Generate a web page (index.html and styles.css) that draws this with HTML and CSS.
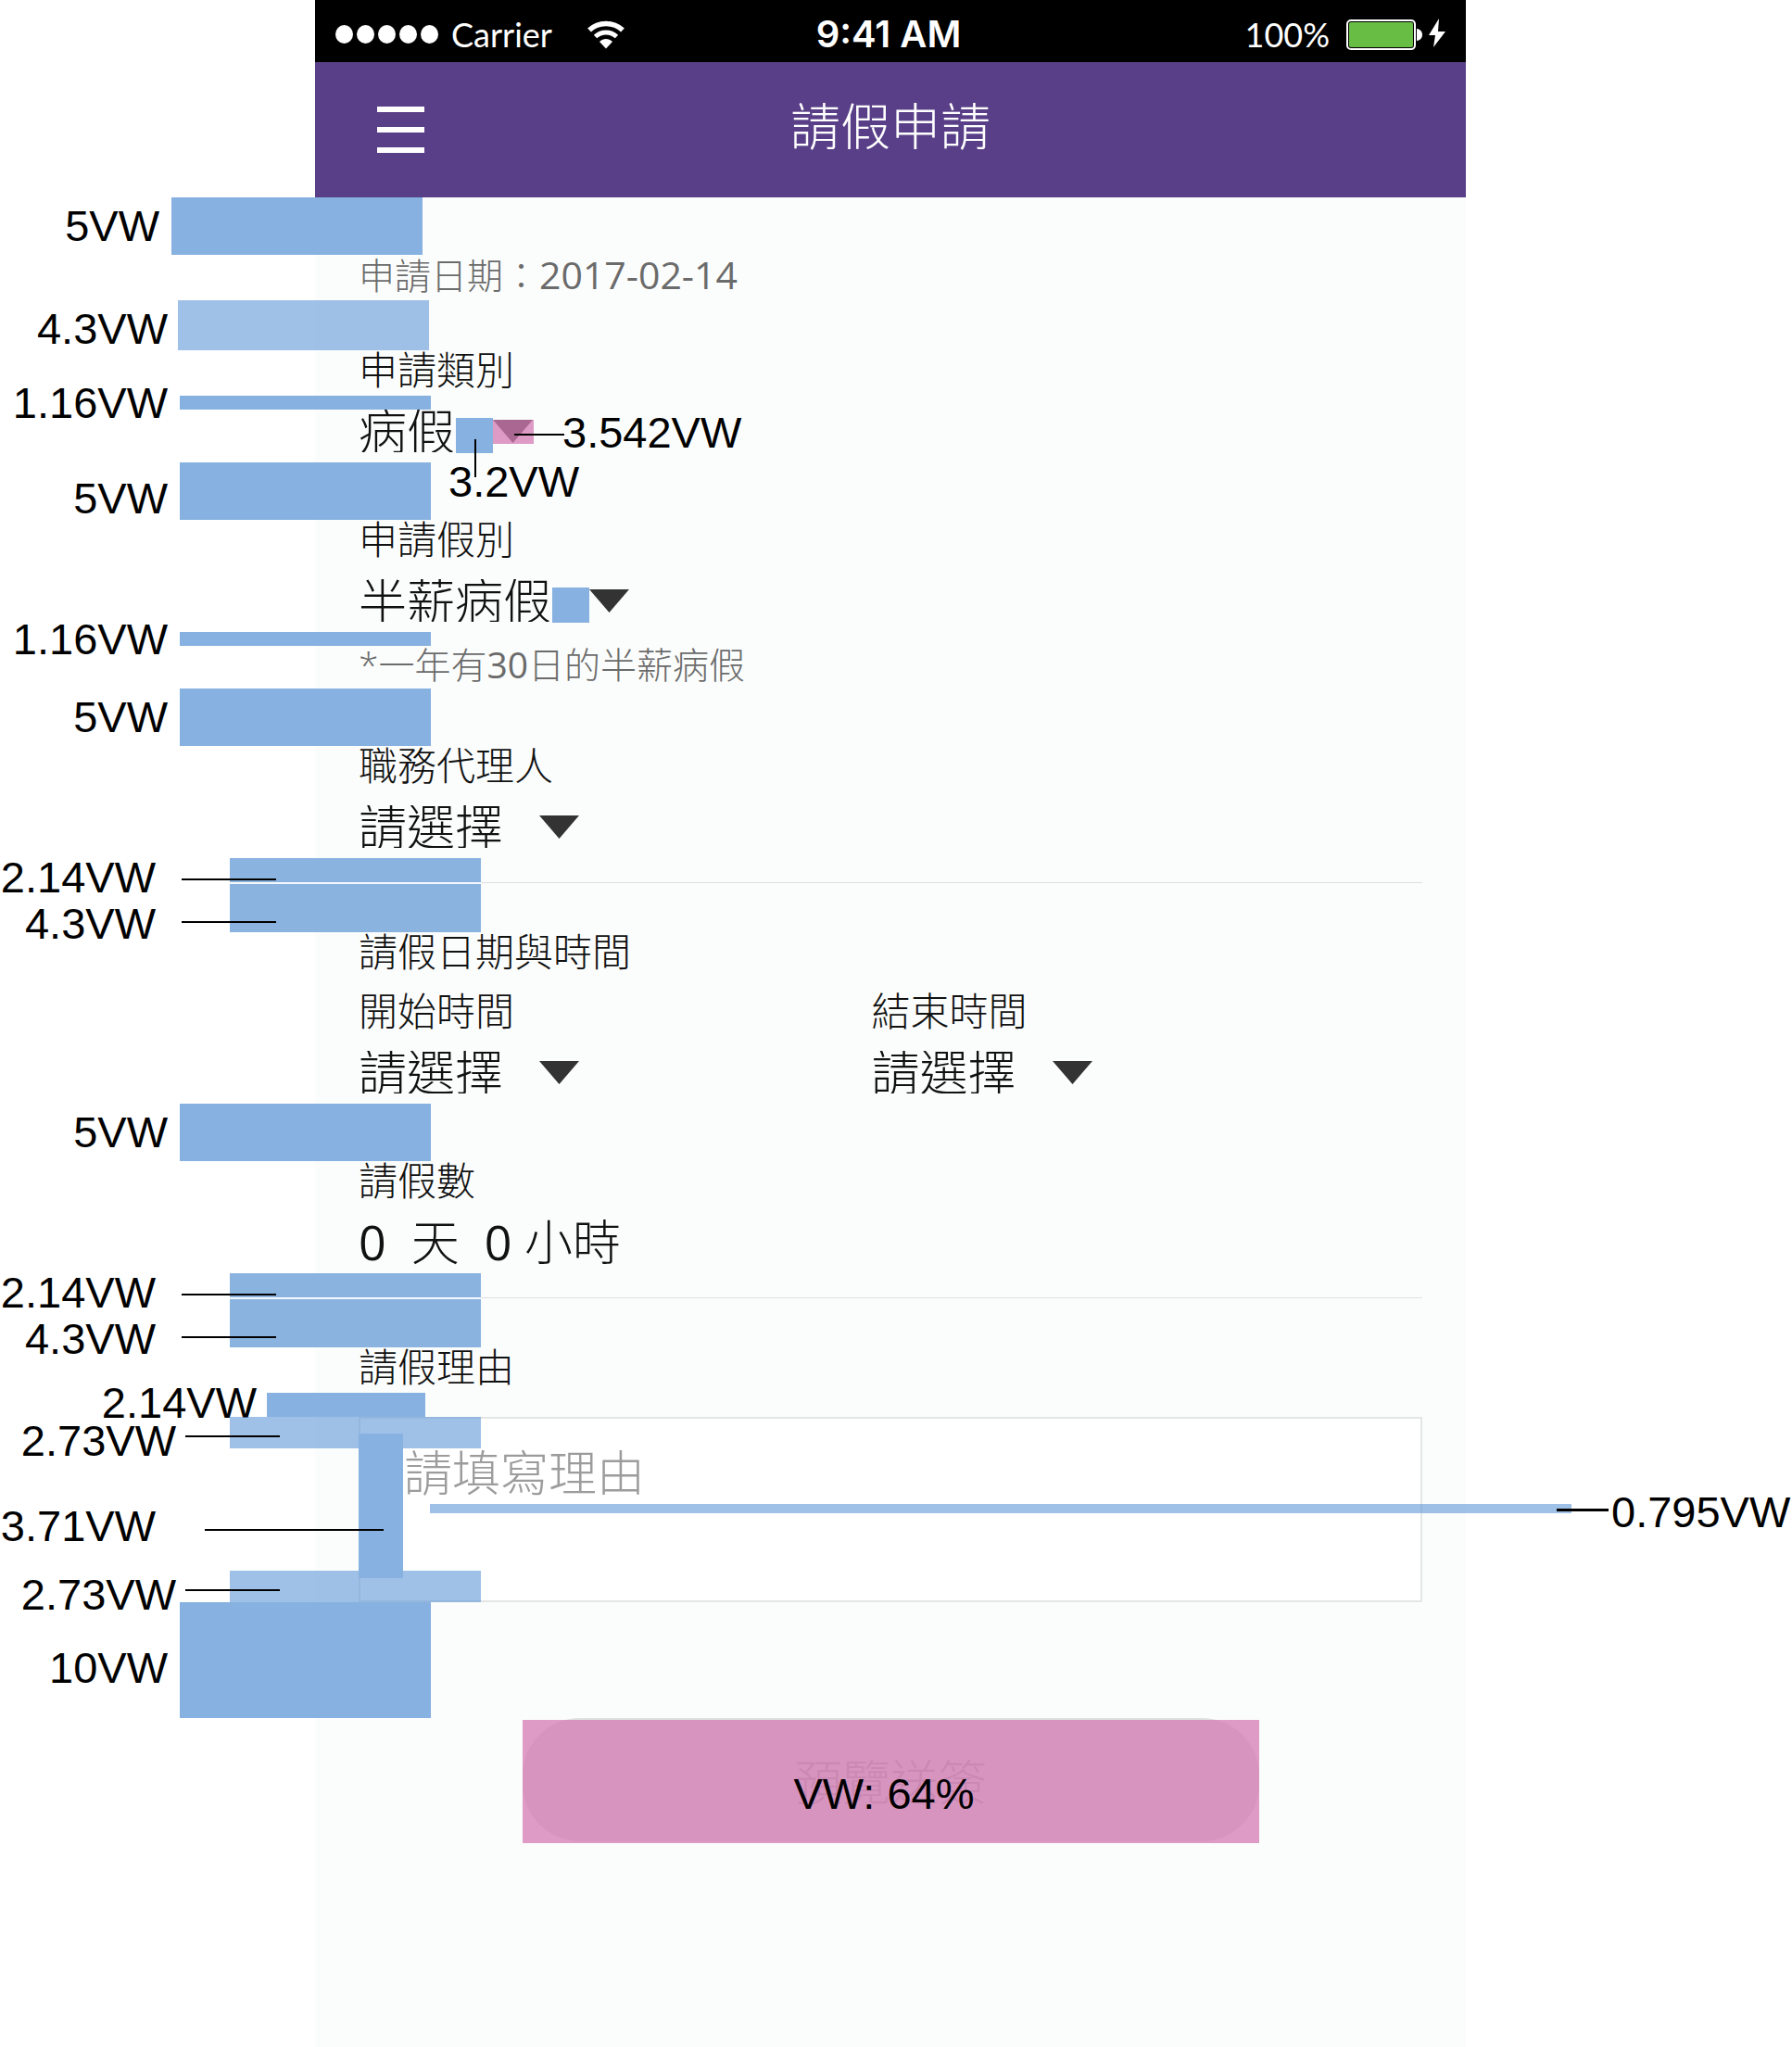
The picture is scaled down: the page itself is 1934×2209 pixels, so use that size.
FILE: index.html
```html
<!DOCTYPE html>
<html lang="zh-Hant">
<head>
<meta charset="utf-8">
<meta name="viewport" content="width=device-width, initial-scale=1">
<title>請假申請</title>
<link rel="stylesheet" href="styles.css">
</head>
<body>
<svg class="sprite" aria-hidden="true">
  <symbol id="caret" viewBox="0 0 43 25"><path d="M0 0h43L21.500 25z"/></symbol>
</svg>
<div class="board">
  <div class="phone">
    <div class="status">
      <div class="status__left">
        <span class="dots"><i></i><i></i><i></i><i></i><i></i></span>
        <span class="carrier">Carrier</span>
        <svg class="wifi" viewBox="0 0 40 32" aria-hidden="true">
          <path d="M2 11.500C12 2 28 2 38 11.500" fill="none" stroke="#fff" stroke-width="5.500"/>
          <path d="M8.500 18.500C15 12.500 25 12.500 31.500 18.500" fill="none" stroke="#fff" stroke-width="5"/>
          <path d="M13 24C17 20 23 20 27 24L20 31.500z" fill="#fff"/>
        </svg>
      </div>
      <div class="status__time">9:41 AM</div>
      <div class="status__right">
        <span>100%</span>
        <svg class="battery" viewBox="0 0 107 34" aria-hidden="true">
          <rect x="1" y="2" width="73" height="31" rx="4" fill="#000" stroke="#fff" stroke-width="2"/>
          <rect x="3" y="4" width="69" height="27" rx="2" fill="#68bd45"/>
          <path d="M76 11c8 1 8 12 0 13z" fill="#fff"/>
          <path d="M100 0L89 18h7l-2 13L107 14h-8z" fill="#fff"/>
        </svg>
      </div>
    </div>
    <header class="bar">
      <button class="menu" type="button" aria-label="選單"><i></i><i></i><i></i></button>
      <h1>請假申請</h1>
    </header>

    <form class="form">
      <div class="gap gap--lg"><div class="mark mark--first"><span class="tag">5VW</span></div></div>
      <p class="date">申請日期：<time datetime="2017-02-14">2017-02-14</time></p>

      <div class="gap gap--md"><div class="mark mark--soft mark--second"><span class="tag tag--second">4.3VW</span></div></div>
      <label class="label" for="kind">申請類別</label>
      <div class="gap gap--sm"><div class="mark"><span class="tag">1.16VW</span></div></div>
      <div class="picker">
        <select id="kind"><option>病假</option></select>
        <span class="space space--filled"><i class="line line--down"></i><span class="tag tag--under">3.2VW</span></span>
        <span class="caret"><svg><use href="#caret"/></svg><i class="caret__tint"></i><i class="line line--out"></i><span class="tag tag--beside">3.542VW</span></span>
      </div>

      <div class="gap gap--lg"><div class="mark"><span class="tag tag--low">5VW</span></div></div>
      <label class="label" for="type">申請假別</label>
      <div class="gap gap--sm"></div>
      <div class="picker">
        <select id="type"><option>半薪病假</option></select>
        <span class="space space--filled"></span>
        <span class="caret"><svg><use href="#caret"/></svg></span>
      </div>
      <div class="gap gap--sm"><div class="mark"><span class="tag">1.16VW</span></div></div>
      <p class="note">*一年有<span>30</span>日的半薪病假</p>

      <div class="gap gap--lg"><div class="mark"><span class="tag">5VW</span></div></div>
      <label class="label" for="agent">職務代理人</label>
      <div class="gap gap--sm"></div>
      <div class="picker">
        <select id="agent"><option>請選擇</option></select>
        <span class="space"></span>
        <span class="caret"><svg><use href="#caret"/></svg></span>
      </div>

      <div class="gap gap--xs"><div class="mark mark--inner"><i class="line line--side"></i><span class="tag tag--far">2.14VW</span></div></div>
      <div class="gap gap--md gap--rule"><div class="mark mark--inner"><i class="line line--side line--low"></i><span class="tag tag--far tag--lower">4.3VW</span></div></div>

      <h2 class="label">請假日期與時間</h2>
      <div class="gap gap--sm"></div>
      <div class="times">
        <div>
          <label class="label" for="start">開始時間</label>
          <div class="gap gap--sm"></div>
          <div class="picker">
            <select id="start"><option>請選擇</option></select>
            <span class="space"></span>
            <span class="caret"><svg><use href="#caret"/></svg></span>
          </div>
        </div>
        <div>
          <label class="label" for="end">結束時間</label>
          <div class="gap gap--sm"></div>
          <div class="picker">
            <select id="end"><option>請選擇</option></select>
            <span class="space"></span>
            <span class="caret"><svg><use href="#caret"/></svg></span>
          </div>
        </div>
      </div>

      <div class="gap gap--lg"><div class="mark"><span class="tag">5VW</span></div></div>
      <h2 class="label">請假數</h2>
      <div class="gap gap--sm"></div>
      <p class="total"><span>0</span>  天  <span>0</span> 小時</p>

      <div class="gap gap--xs"><div class="mark mark--inner"><i class="line line--side"></i><span class="tag tag--far">2.14VW</span></div></div>
      <div class="gap gap--md gap--rule"><div class="mark mark--inner"><i class="line line--side line--low"></i><span class="tag tag--far tag--lower">4.3VW</span></div></div>

      <label class="label" for="reason">請假理由</label>
      <div class="gap gap--xs"><div class="mark mark--short"><span class="tag tag--near">2.14VW</span></div></div>
      <div class="reason">
        <textarea id="reason" placeholder="請填寫理由"></textarea>
        <div class="mark mark--soft mark--inner mark--top"><i class="line line--edge"></i><span class="tag tag--edge">2.73VW</span></div>
        <div class="mark mark--soft mark--inner mark--bottom"><i class="line line--edge"></i><span class="tag tag--edge">2.73VW</span></div>
        <div class="mark mark--inset"><i class="line line--long"></i><span class="tag tag--long">3.71VW</span></div>
        <div class="mark mark--soft mark--leading"><i class="line line--right"></i><span class="tag tag--right">0.795VW</span></div>
      </div>

      <div class="gap gap--xl"><div class="mark"><span class="tag tag--low">10VW</span></div></div>
      <div class="send">
        <button type="button">預覽送簽</button>
        <div class="send__tint"><span class="send__size">VW: 64%</span></div>
      </div>
    </form>
  </div>
</div>
</body>
</html>
```
FILE: styles.css
```css
* { box-sizing: border-box; }

html { overflow-x: hidden; }

body {
  margin: 0;
  background: #fff;
  color: #111;
  font-family: "Open Sans", "Noto Sans CJK TC", sans-serif;
  font-weight: 300;
}

h1, h2, p { margin: 0; font-weight: 300; }

.sprite { position: absolute; width: 0; height: 0; }

.board {
  display: grid;
  grid-template-columns: 340px minmax(0, 1fr) 352px;
  min-height: 100vh;
}

.phone { grid-column: 2; background: #fbfdfc; }

/* status bar */
.status {
  display: grid;
  grid-template-columns: 1fr auto 1fr;
  align-items: center;
  height: 67px;
  padding: 6px 22px 0;
  background: #000;
  color: #fff;
  font: 400 36px/44px Lato, sans-serif;
}
.status__left, .status__right { display: flex; align-items: center; }
.status__right { justify-content: flex-end; gap: 18px; }
.status__time { padding-right: 4px; font: 600 40px/44px Inter, sans-serif; }
.dots { display: flex; gap: 4px; margin-right: 14px; }
.dots i { width: 19px; height: 20px; border-radius: 50%; background: #fff; }
.carrier { margin-right: 38px; }
.wifi { width: 40px; height: 32px; }
.battery { width: 107px; height: 34px; }

/* title bar */
.bar {
  display: grid;
  grid-template-columns: 1fr auto 1fr;
  align-items: center;
  height: 146px;
  padding: 0 67px 8px;
  background: #583f87;
  color: #fff;
}
.bar h1 { font-size: 54px; line-height: 64px; }
.menu {
  display: grid;
  gap: 16px;
  width: 51px;
  margin-top: 8px;
  padding: 0;
  border: 0;
  background: none;
}
.menu i { height: 6px; background: #fff; }

/* form */
.form { padding: 0 47px 100px; }
.label {
  display: block;
  padding-bottom: 8px;
  font-size: 42px;
  line-height: 41px;
}
.date, .note { padding-bottom: 6px; color: #6b6b6b; font-size: 39px; }
.date { line-height: 42px; }
.date time { font-size: 41px; font-weight: 400; }
.note { line-height: 40px; }
.note span, .total span { font-weight: 400; }
.total { height: 57px; font-size: 52px; line-height: 46px; white-space: pre; }

.picker { display: flex; height: 57px; }
.picker select {
  height: 46px;
  padding: 0;
  border: 0;
  appearance: none;
  background: none;
  color: #111;
  font: inherit;
  font-size: 52px;
  line-height: 46px;
}
.space { position: relative; width: 38px; height: 38px; margin-top: 9px; }
.space--filled { width: 40px; background: #87b1e0; }
.caret { position: relative; width: 44px; height: 26px; margin-top: 11px; }
.caret svg { display: block; width: 43px; height: 25px; fill: #333; }
.caret__tint { position: absolute; inset: 0; background: rgba(211, 121, 179, .745); }

.times { display: grid; grid-template-columns: 27fr 29fr; }

.reason { position: relative; }
.reason textarea {
  display: block;
  width: 100%;
  height: 200px;
  padding: 30px 47px;
  border: 2px solid #e4e6e6;
  background: #fff;
  color: #111;
  font: inherit;
  font-size: 52px;
  line-height: 56px;
  resize: none;
}
.reason textarea::placeholder { color: #9d9c9c; opacity: 1; }

.send { position: relative; max-width: 795px; margin: 0 auto; }
.send button {
  display: block;
  width: 100%;
  height: 133px;
  padding: 0;
  border: 0;
  border-radius: 62px;
  background: #dfe1e1;
  color: #b4b4b4;
  font: inherit;
  font-size: 52px;
}
.send__tint {
  position: absolute;
  inset: 2px 0 -2px;
  display: grid;
  place-items: center;
  padding: 26px 14px 0 0;
  background: rgba(211, 121, 179, .745);
}
.send__size { color: #000; font: 400 47px/48px "Liberation Sans", Arial, sans-serif; }

/* measured gaps */
.gap { position: relative; }
.gap--xs { height: 26px; }
.gap--sm { height: 15px; }
.gap--md { height: 54px; }
.gap--lg { height: 62px; }
.gap--xl { height: 125px; }
.gap--rule { border-top: 1px solid #dfe1e1; }

.mark {
  position: absolute;
  top: 0;
  bottom: 0;
  left: -193px;
  width: 271px;
  background: #87b1e0;
}
.gap--rule .mark { top: -1px; border-top: 2px solid #f6f9fc; }
.mark--soft { background: rgba(97, 152, 215, .6); }
.mark--first { left: -202px; }
.mark--second { left: -195px; }
.mark--inner { left: -139px; }
.gap .mark--inner { background: #8bb3e0; }
.mark--short { left: -99px; width: 171px; }
.mark--top { bottom: auto; height: 34px; }
.mark--bottom { top: auto; height: 34px; }
.mark--inset { top: 18px; bottom: auto; left: 0; width: 48px; height: 156px; }
.mark--leading { top: 94px; bottom: auto; right: -161px; left: 77px; width: auto; height: 10px; }

.tag {
  position: absolute;
  top: 0;
  right: 100%;
  bottom: 0;
  display: flex;
  align-items: center;
  margin-right: 13px;
  color: #000;
  font: 400 47px/48px "Liberation Sans", Arial, sans-serif;
  white-space: nowrap;
}
.tag--low { top: 16px; }
.tag--second { top: 8px; margin-right: 11px; }
.tag--far { top: 16px; margin-right: 80px; }
.tag--lower { top: 34px; }
.tag--near { top: -4px; margin-right: 11px; }
.tag--edge { top: 18px; margin-right: 58px; }
.tag--long { top: 44px; margin-right: 219px; }
.tag--right { right: auto; left: 100%; top: 8px; margin: 0 0 0 43px; }
.tag--under { top: 45px; right: auto; bottom: auto; left: -8px; margin: 0; }
.tag--beside { top: 2px; right: auto; left: 75px; margin: 0; }

/* leader lines */
.line { position: absolute; height: 2px; background: #000; }
.line--side { top: 22px; left: -52px; width: 102px; }
.line--low { top: 40px; }
.line--edge { top: 20px; left: -48px; width: 102px; }
.line--long { top: 103px; left: -166px; width: 193px; }
.line--right { top: 5px; right: -40px; width: 56px; height: 3px; }
.line--out { top: 15px; left: 23px; width: 54px; }
.line--down { top: 23px; left: 20px; width: 2px; height: 41px; }
```
